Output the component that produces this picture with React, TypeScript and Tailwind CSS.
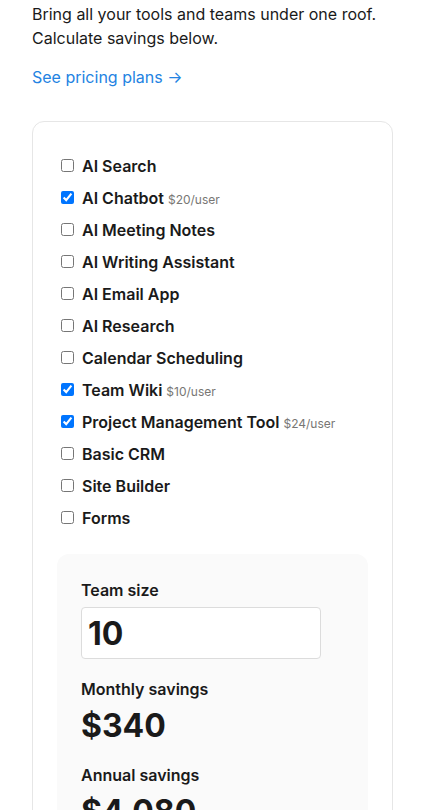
import { useState } from 'react'

const tools = [
    { name: 'AI Search', price: 0 },
    { name: 'AI Chatbot', price: 20 },
    { name: 'AI Meeting Notes', price: 0 },
    { name: 'AI Writing Assistant', price: 0 },
    { name: 'AI Email App', price: 0 },
    { name: 'AI Research', price: 0 },
    { name: 'Calendar Scheduling', price: 0 },
    { name: 'Team Wiki', price: 10 },
    { name: 'Project Management Tool', price: 24 },
    { name: 'Basic CRM', price: 0 },
    { name: 'Site Builder', price: 0 },
    { name: 'Forms', price: 0 },
]

// price per user of the plan that replaces the tools
const PLAN_PRICE = 20

export default function App() {
    const [checked, setChecked] = useState<string[]>(['AI Chatbot', 'Team Wiki', 'Project Management Tool'])
    const [team, setTeam] = useState('10')

    const perUser = tools.filter((t) => checked.includes(t.name)).reduce((s, t) => s + t.price, 0)
    const size = parseInt(team) || 0
    const monthly = Math.max(0, perUser - PLAN_PRICE) * size
    const annual = monthly * 12

    const toggle = (name: string) =>
        setChecked((c) => (c.includes(name) ? c.filter((n) => n !== name) : [...c, name]))

    return (
        <div className="min-h-screen bg-white px-8 pt-[2px] text-[#1a1a1a] font-['Inter',sans-serif]">
            <p className="text-base leading-6">
                Bring all your tools and teams under one roof.
                <br />
                Calculate savings below.
            </p>
            <a href="#" className="mt-[15px] block text-base leading-6 text-[#2383e2]">
                See pricing plans →
            </a>

            <div className="mt-8 rounded-xl border border-[#e6e6e6] px-6 pt-7 pb-6">
                <ul>
                    {tools.map((t) => {
                        const on = checked.includes(t.name)
                        return (
                            <li key={t.name} className="flex h-8 items-center">
                                <input
                                    type="checkbox"
                                    checked={on}
                                    onChange={() => toggle(t.name)}
                                    className="ml-1 mr-2 h-[13px] w-[13px] -translate-y-[1px]"
                                />
                                <label className="flex items-baseline gap-1" onClick={() => toggle(t.name)}>
                                    <span className="text-base font-semibold leading-6">{t.name}</span>
                                    {on && t.price > 0 && (
                                        <span className="text-xs text-[#787774]">${t.price}/user</span>
                                    )}
                                </label>
                            </li>
                        )
                    })}
                </ul>

                <div className="mt-5 rounded-xl bg-[#fafafa] p-6">
                    <div className="text-base font-semibold leading-6">Team size</div>
                    <input
                        value={team}
                        onChange={(e) => setTeam(e.target.value)}
                        className="mt-[5px] block h-[52px] w-[240px] rounded border border-[#dcdcdc] bg-white px-[6px] text-[32px] font-bold outline-none"
                    />
                    <div className="mt-[18px] text-base font-semibold leading-6">Monthly savings</div>
                    <div className="mt-[5px] text-[32px] font-bold leading-10">${monthly.toLocaleString('en-US')}</div>
                    <div className="mt-[17px] text-base font-semibold leading-6">Annual savings</div>
                    <div className="mt-[5px] text-[32px] font-bold leading-10">${annual.toLocaleString('en-US')}</div>
                </div>
            </div>
        </div>
    )
}
